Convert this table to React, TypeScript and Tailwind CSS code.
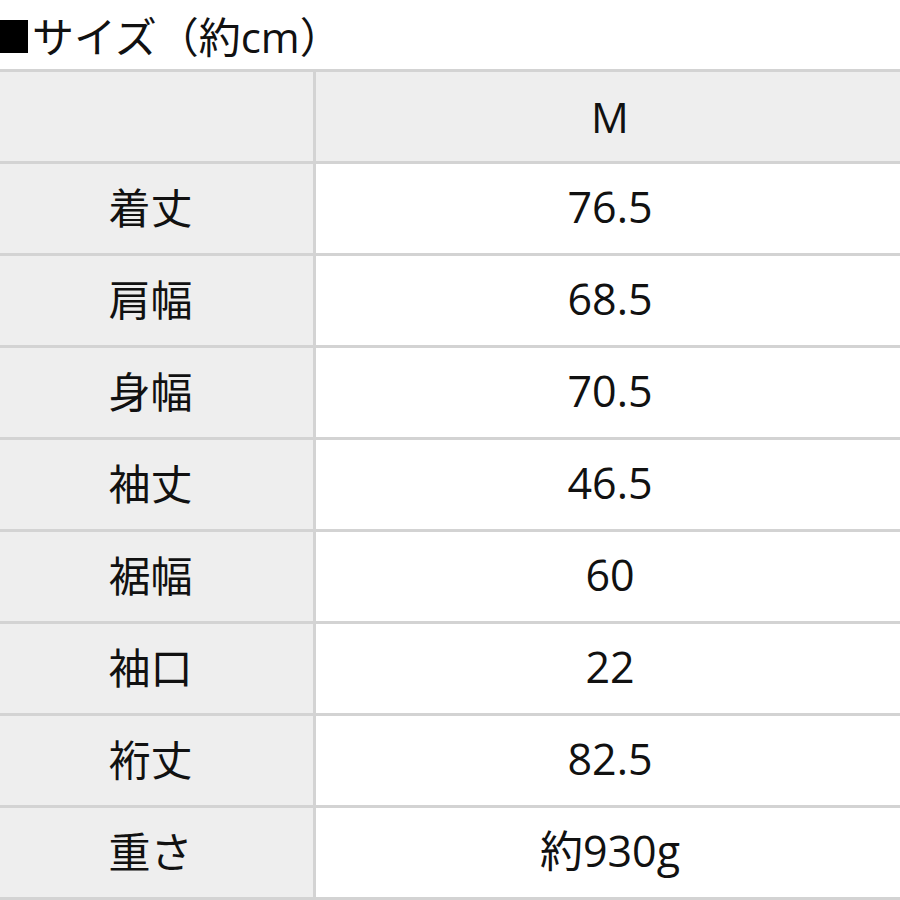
const ROWS = [
  { label: "着丈", value: "76.5" },
  { label: "肩幅", value: "68.5" },
  { label: "身幅", value: "70.5" },
  { label: "袖丈", value: "46.5" },
  { label: "裾幅", value: "60" },
  { label: "袖口", value: "22" },
  { label: "裄丈", value: "82.5" },
  { label: "重さ", value: "約930g" },
];

const font = { fontFamily: '"Open Sans", "Noto Sans CJK JP", sans-serif' };

export default function App() {
  return (
    <div className="h-[900px] w-[900px] overflow-hidden bg-white text-[#111]" style={font}>
      <div className="flex h-[69px] items-center pt-[4px] text-[42px] leading-none">
        <span className="mr-[4px] h-[33px] w-[28px] shrink-0 bg-black" />
        <span>サイズ（約cm）</span>
      </div>

      <div className="border-t-[3px] border-b-[3px] border-[#d3d3d3]">
        <div className="grid h-[89px] grid-cols-[313px_3px_1fr] bg-[#eeeeee]">
          <div />
          <div className="bg-[#d3d3d3]" />
          <div className="flex items-center justify-center pl-[4px] text-[42px]">M</div>
        </div>
        {ROWS.map((row) => (
          <div
            key={row.label}
            className="grid h-[92px] grid-cols-[313px_3px_1fr] border-t-[3px] border-[#d3d3d3]"
          >
            <div className="flex items-center justify-center bg-[#eeeeee] pb-[2px] pr-[12px] text-[42px]">
              {row.label}
            </div>
            <div className="bg-[#d3d3d3]" />
            <div className="flex items-center justify-center bg-white pb-[2px] pl-[4px] text-[43px]">
              {row.value}
            </div>
          </div>
        ))}
      </div>
    </div>
  );
}
